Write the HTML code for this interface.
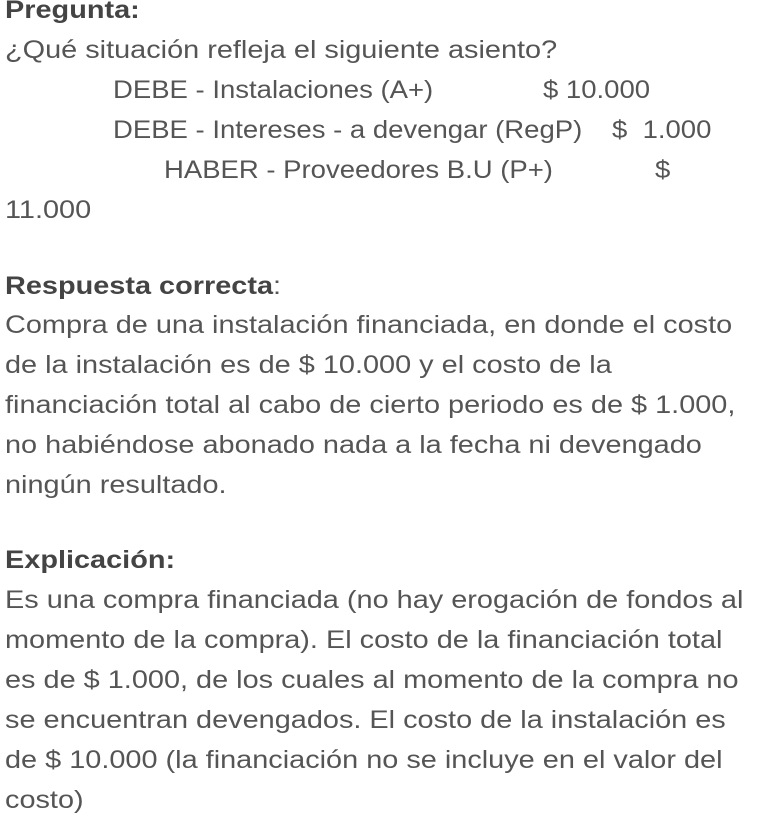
<!DOCTYPE html>
<html><head><meta charset="utf-8"><style>
html,body{margin:0;padding:0;background:#fff;}
body{width:772px;height:828px;position:relative;overflow:hidden;font-family:"Liberation Sans",sans-serif;font-size:25px;color:#555;}
.l{position:absolute;left:5px;white-space:nowrap;line-height:40px;height:40px;transform:scaleX(1.155);transform-origin:0 0;}
.i{transform:scaleX(1.1);}
b{color:#444;}
</style></head><body>
<div class="l" style="top:-10px"><b>Pregunta:</b></div>
<div class="l" style="top:30px">¿Qué situación refleja el siguiente asiento?</div>
<div class="l i" style="top:70px;left:113px">DEBE - Instalaciones (A+)</div>
<div class="l i" style="top:70px;left:543px">$ 10.000</div>
<div class="l i" style="top:110px;left:113px">DEBE - Intereses - a devengar (RegP)</div>
<div class="l i" style="top:110px;left:612px">$&nbsp; 1.000</div>
<div class="l i" style="top:150px;left:164px">HABER - Proveedores B.U (P+)</div>
<div class="l i" style="top:150px;left:655px">$</div>
<div class="l" style="top:190px">11.000</div>
<div class="l" style="top:266px"><b>Respuesta correcta</b>:</div>
<div class="l" style="top:305px">Compra de una instalación financiada, en donde el costo</div>
<div class="l" style="top:345px">de la instalación es de $ 10.000 y el costo de la</div>
<div class="l" style="top:385px">financiación total al cabo de cierto periodo es de $ 1.000,</div>
<div class="l" style="top:425px">no habiéndose abonado nada a la fecha ni devengado</div>
<div class="l" style="top:465px">ningún resultado.</div>
<div class="l" style="top:540px"><b>Explicación:</b></div>
<div class="l" style="top:580px">Es una compra financiada (no hay erogación de fondos al</div>
<div class="l" style="top:620px">momento de la compra). El costo de la financiación total</div>
<div class="l" style="top:660px">es de $ 1.000, de los cuales al momento de la compra no</div>
<div class="l" style="top:700px">se encuentran devengados. El costo de la instalación es</div>
<div class="l" style="top:740px">de $ 10.000 (la financiación no se incluye en el valor del</div>
<div class="l" style="top:780px">costo)</div>
</body></html>
